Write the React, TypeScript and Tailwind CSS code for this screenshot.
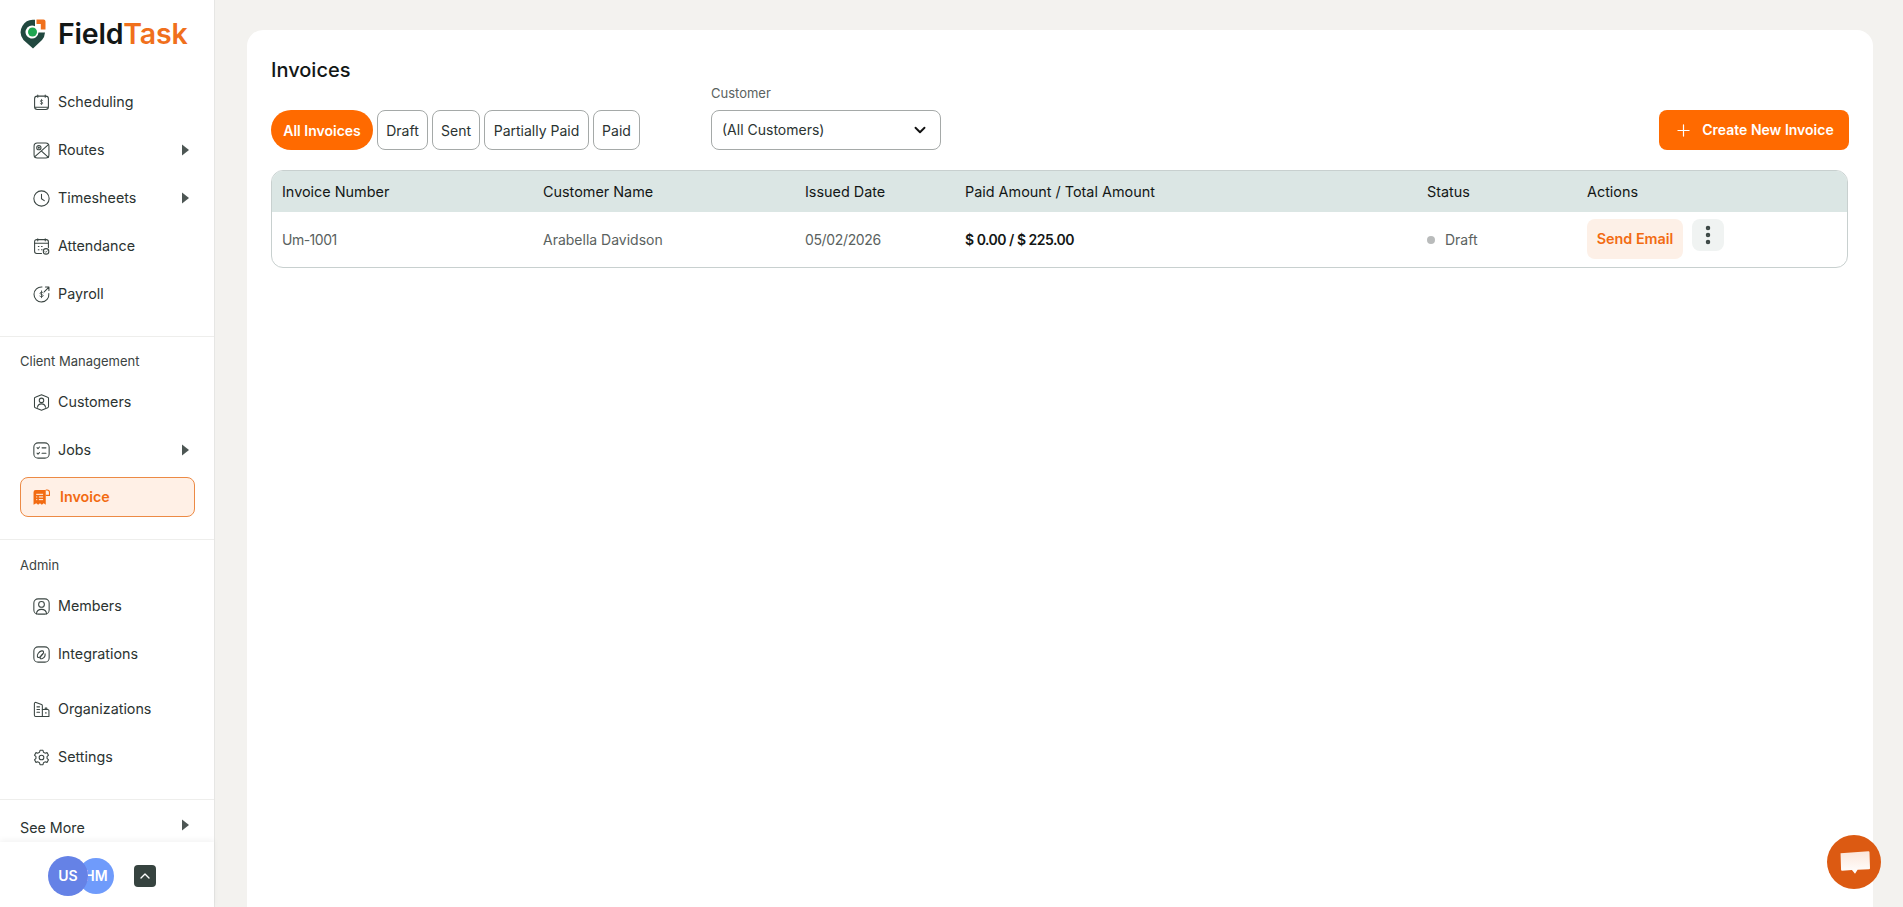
import React from 'react';
import { Plus, ChevronDown, ChevronUp, EllipsisVertical } from 'lucide-react';

const FONT = "font-['Inter','Liberation_Sans',sans-serif]";

const Svg: React.FC<{ children: React.ReactNode }> = ({ children }) => (
  <svg viewBox="0 0 16 16" fill="none" stroke="#3a4542" strokeWidth="1" strokeLinecap="round" strokeLinejoin="round" className="w-[17px] h-[17px] shrink-0">
    {children}
  </svg>
);

const SchedulingIcon = () => (
  <Svg>
    <rect x="1.5" y="2" width="13" height="12.5" rx="2.5" />
    <path d="M4.5 1v2M11.5 1v2M2 12.5h12" />
    <path d="M9.3 6.2c-.4-.5-2.4-.6-2.4.5s2.4.7 2.4 1.8-2.2 1-2.6.4M8 5v5" strokeWidth="0.7" />
  </Svg>
);
const RoutesIcon = () => (
  <Svg>
    <rect x="1" y="1" width="14" height="14" rx="3" />
    <path d="M1.5 14 14.5 2.5M8 8.5l6.5 6" />
    <circle cx="5.5" cy="5.3" r="2" />
    <circle cx="5.5" cy="5.3" r=".5" />
  </Svg>
);
const ClockIcon = () => (
  <Svg>
    <circle cx="8" cy="8" r="7.2" />
    <path d="M8 4v4.2l2.6 1.8" />
  </Svg>
);
const AttendanceIcon = () => (
  <Svg>
    <path d="M8 14.5H3.5a2 2 0 0 1-2-2V3.500a2 2 0 0 1 2-2h9a2 2 0 0 1 2 2V9" />
    <path d="M4.500.7v2M11.500.7v2M1.500 5h13" />
    <path d="M5 8h.6M8 8h.6M5 11h.6M8 11h.6" />
    <circle cx="12.300" cy="12.600" r="2.600" />
    <path d="m11.200 12.700.8.8 1.400-1.400" strokeWidth="0.7" />
  </Svg>
);
const PayrollIcon = () => (
  <Svg>
    <path d="M8.500 1a7 7 0 1 0 6.400 6.200" />
    <path d="M10.500 5.500 15 1M11.700 1H15v3.300" />
    <path d="M9.600 6.300c-.5-.7-3-.7-3 .6s3 .9 3 2.200-2.700 1.200-3.200.5M8 4.600v6.400" strokeWidth="0.8" />
  </Svg>
);
const CustomersIcon = () => (
  <Svg>
    <path d="M8 .8 13.800 3a1.200 1.200 0 0 1 .8 1.100v7.700a1.200 1.200 0 0 1-.8 1.100L8 15.200 2.200 13a1.200 1.200 0 0 1-.8-1.100V4.100A1.200 1.200 0 0 1 2.200 3z" />
    <circle cx="8" cy="6" r="2.100" />
    <path d="M4.200 12.500c.3-2 1.900-3.200 3.800-3.200s3.500 1.200 3.800 3.200" />
  </Svg>
);
const JobsIcon = () => (
  <Svg>
    <rect x=".8" y=".8" width="14.400" height="14.400" rx="4" />
    <path d="m3.800 5.300.9.9 1.400-1.500M8.500 5.500h3.700M8.500 10.500h3.700M3.800 10.500l.9.9 1.400-1.500" />
  </Svg>
);
const InvoiceIcon = () => (
  <svg viewBox="0 0 16 16" className="w-[17px] h-[17px] shrink-0">
    <path d="M.5 3a2 2 0 0 1 2-2H12v13.800l-1.900-1.300-1.800 1.400-1.700-1.400-1.800 1.400-1.700-1.400L.5 14.800z" fill="#f26b12" />
    <path d="M12 1h1.300A2.200 2.200 0 0 1 15.500 3.200V6H12" fill="none" stroke="#f26b12" strokeWidth="1" />
    <path d="M3 5h6.500M3 7.500h1M5.500 7.500h4M3 10h1M5.500 10h4" stroke="#fff" strokeWidth="0.9" />
  </svg>
);
const MembersIcon = () => (
  <Svg>
    <rect x=".8" y=".8" width="14.400" height="14.400" rx="4" />
    <circle cx="8" cy="6" r="2.700" />
    <path d="M3.200 15c.3-2.900 2.300-4.300 4.800-4.300s4.500 1.400 4.800 4.300" />
  </Svg>
);
const IntegrationsIcon = () => (
  <Svg>
    <rect x=".8" y=".8" width="14.400" height="14.400" rx="4" />
    <path d="M4.200 10.200c-.8-1.800 1.500-5.200 4-5.600 2-.3 2.300 1.500 1 3l-2 2.300c-1.300 1.400-.4 2.500 1.200 2 1.800-.6 3.200-2.700 3-4.600" />
    <path d="M4.200 10.200c.5 1 1.700.7 2.700-.3l2.200-2.400" />
  </Svg>
);
const OrganizationsIcon = () => (
  <Svg>
    <path d="M9.500 14.500H2.500a1.200 1.200 0 0 1-1.200-1.200V2.500a1.200 1.200 0 0 1 1.600-1.100L8 3.300a1.200 1.200 0 0 1 .8 1.100v10" />
    <path d="M3.700 5.500h2.500M3.700 8h2.500M3.700 10.500h2.500" />
    <path d="M8.800 8h5a1.200 1.200 0 0 1 1.200 1.200v5.300H8.800M11.500 8V6.500H13V8M11.800 11.200h.6" />
  </Svg>
);
const SettingsIcon = () => (
  <Svg>
    <path d="M6.600 1.200h2.800l.5 1.900 1.400.8 1.900-.5 1.400 2.400-1.400 1.400v1.600l1.400 1.400-1.400 2.400-1.900-.5-1.400.8-.5 1.900H6.600l-.5-1.900-1.400-.8-1.900.5-1.400-2.400 1.400-1.400V7.200L1.400 5.800l1.400-2.400 1.900.5 1.400-.8z" />
    <circle cx="8" cy="8" r="2.200" />
  </Svg>
);

const Caret = () => (
  <svg viewBox="0 0 7 12" className="w-[7px] h-3 shrink-0">
    <path d="M0 0.500 7 6 0 11.500z" fill="#4d5654" />
  </svg>
);

const Logo = () => (
  <svg viewBox="0 0 26 30" className="w-[26px] h-[30px] shrink-0">
    <path d="M15 .8A12.500 12.500 0 0 0 3.500 21L13 29.500 22 21A12.500 12.500 0 0 0 25 13.500H18.500A6.500 6.500 0 1 1 15 7.300z" fill="#21483f" />
    <circle cx="12.500" cy="13" r="4.500" fill="#1fa651" />
    <path d="M16.500 .5H23.500a2 2 0 0 1 2 2V10.500H20.800V5H16.500z" fill="#f0701c" />
  </svg>
);

const NavRow: React.FC<{ icon: React.ReactNode; label: string; caret?: boolean }> = ({ icon, label, caret }) => (
  <div className="h-12 pl-[33px] pr-[25px] flex items-center gap-2 text-[14.3px] text-[#2b3331]">
    {icon}
    <span className="flex-1">{label}</span>
    {caret && <Caret />}
  </div>
);

const tabs = [
  { label: 'Draft', width: 'w-[51px]' },
  { label: 'Sent', width: 'w-[48px]' },
  { label: 'Partially Paid', width: 'w-[105px]' },
  { label: 'Paid', width: 'w-[47px]' },
];

const COLS = 'grid grid-cols-[261px_262px_160px_462px_160px_1fr] items-center pl-[10px]';

const App: React.FC = () => {
  return (
    <div className={`h-screen w-full overflow-hidden flex bg-[#f3f2ef] ${FONT}`}>
      <aside className="w-[215px] shrink-0 h-full bg-white border-r border-[#e6e6e4] flex flex-col relative">
        <div className="h-[78px] pl-5 pt-[19px] flex items-start gap-3">
          <Logo />
          <div className="text-[28.5px] leading-[30px] font-semibold tracking-[-0.2px] text-[#131716]">
            Field<span className="text-[#f0701c]">Task</span>
          </div>
        </div>

        <NavRow icon={<SchedulingIcon />} label="Scheduling" />
        <NavRow icon={<RoutesIcon />} label="Routes" caret />
        <NavRow icon={<ClockIcon />} label="Timesheets" caret />
        <NavRow icon={<AttendanceIcon />} label="Attendance" />
        <NavRow icon={<PayrollIcon />} label="Payroll" />

        <div className="mt-[18px] border-t border-[#eeeeec]" />
        <div className="h-[41px] pl-5 pt-[14px] text-[13px] leading-5 text-[#3c4442]">Client Management</div>
        <NavRow icon={<CustomersIcon />} label="Customers" />
        <NavRow icon={<JobsIcon />} label="Jobs" caret />
        <div className="mx-5 mt-[3px] h-10 w-[175px] rounded-lg border border-[#ec8a45] bg-[#fff0e6] pl-3 flex items-center gap-[10px] text-[14.3px] font-semibold text-[#f26b12]">
          <InvoiceIcon />
          Invoice
        </div>

        <div className="mt-[22px] border-t border-[#eeeeec]" />
        <div className="h-[42px] pl-5 pt-[15px] text-[13px] leading-5 text-[#3c4442]">Admin</div>
        <NavRow icon={<MembersIcon />} label="Members" />
        <NavRow icon={<IntegrationsIcon />} label="Integrations" />
        <div className="h-[7px]" />
        <NavRow icon={<OrganizationsIcon />} label="Organizations" />
        <NavRow icon={<SettingsIcon />} label="Settings" />

        <div className="mt-[18px] border-t border-[#eeeeec]" />
        <div className="h-[42px] pl-5 pr-[25px] flex items-center justify-between text-[14.3px] text-[#2b3331]">
          <span className="pt-[14px]">See More</span>
          <span className="pt-[8px]"><Caret /></span>
        </div>

        <div className="flex-1 bg-white shadow-[0_-2px_6px_rgba(0,0,0,0.05)] flex items-center pl-12 pt-[2px] relative">
          <div className="w-10 h-10 rounded-full bg-[#6582e6] text-white text-sm font-semibold flex items-center justify-center relative z-10">US</div>
          <div className="w-9 h-9 -ml-[10px] rounded-full bg-[#6f9bfb] text-white text-sm font-semibold flex items-center justify-center">HM</div>
          <button className="ml-[20px] w-[22px] h-[22px] rounded bg-[#36433f] flex items-center justify-center text-white">
            <ChevronUp className="w-4 h-4" strokeWidth={2} />
          </button>
        </div>
      </aside>

      <main className="flex-1 min-w-0 h-full pl-[32px] pr-[30px] pt-[30px]">
        <div className="h-full bg-white rounded-t-2xl px-6 pt-[26px]">
          <h1 className="text-xl leading-7 font-medium text-[#131716]">Invoices</h1>

          <div className="flex items-end justify-between mt-[2px] h-[64px]">
            <div className="flex items-end">
              <div className="flex gap-1 text-sm">
                <button className="h-10 w-[102px] pt-[2px] rounded-[20px] bg-[#ff6a00] text-white font-semibold text-[14px]">All Invoices</button>
                {tabs.map(t => (
                  <button key={t.label} className={`h-10 ${t.width} pt-[2px] rounded-lg border border-[#a5a9a8] text-[#2b3331]`}>{t.label}</button>
                ))}
              </div>
              <div className="ml-[71px] w-[230px]">
                <div className="text-[13px] leading-5 text-[#5a6260] mb-[7px]">Customer</div>
                <div className="h-10 rounded-lg border border-[#a5a9a8] pl-[10px] pr-[11px] flex items-center justify-between text-sm text-[#2b3331]">
                  (All Customers)
                  <ChevronDown className="w-[18px] h-[18px] text-[#111]" strokeWidth={2.5} />
                </div>
              </div>
            </div>
            <button className="h-10 w-[190px] rounded-lg bg-[#ff6a00] text-white text-sm font-semibold flex items-center justify-center gap-[9px]">
              <Plus className="w-[19px] h-[19px]" strokeWidth={1.5} />
              Create New Invoice
            </button>
          </div>

          <div className="mt-5 rounded-xl border border-[#c8d0cf] overflow-hidden mr-px">
            <div className={`${COLS} h-[41px] bg-[#dbe6e4] text-[14.4px] text-[#131716]`}>
              <span>Invoice Number</span>
              <span>Customer Name</span>
              <span>Issued Date</span>
              <span>Paid Amount / Total Amount</span>
              <span>Status</span>
              <span>Actions</span>
            </div>
            <div className={`${COLS} h-[55px] text-sm text-[#5a6260]`}>
              <span className="tracking-[-0.5px] pt-[1px]">Um-1001</span>
              <span className="pt-[1px]">Arabella Davidson</span>
              <span className="tracking-[-0.36px] pt-[1px]">05/02/2026</span>
              <span className="font-semibold text-[#131716] tracking-[-0.5px] pt-[1px]">$ 0.00 / $ 225.00</span>
              <span className="flex items-center gap-[10px] pt-[1px]">
                <span className="w-2 h-2 rounded-full bg-[#b9bbbb]" />
                Draft
              </span>
              <span className="flex items-start gap-[9px] self-start mt-[7px]">
                <button className="h-10 w-[96px] rounded-lg bg-[#fdf0e7] text-[#f26b12] font-semibold text-[14.4px]">Send Email</button>
                <button className="w-8 h-8 rounded-lg bg-[#f0f3f2] flex items-center justify-center text-[#3d4845]">
                  <EllipsisVertical className="w-6 h-6" strokeWidth={2.5} />
                </button>
              </span>
            </div>
          </div>
        </div>
      </main>

      <div className="absolute right-[22px] bottom-[18px] w-[54px] h-[54px] rounded-full bg-[#dc5a12] flex items-center justify-center">
        <svg viewBox="0 0 30 24" className="w-[31px] h-[25px]">
          <defs>
            <linearGradient id="chat" x1="0" y1="0" x2="0" y2="1">
              <stop offset="0" stopColor="#fbe6da" />
              <stop offset="1" stopColor="#ffffff" />
            </linearGradient>
          </defs>
          <path d="M1.500 3 28.500 1a1 1 0 0 1 1 1l.5 15.500a1 1 0 0 1-1 1L18 19l-2.500 4-3-3.800L3 20a1 1 0 0 1-1-1z" fill="url(#chat)" />
        </svg>
      </div>
    </div>
  );
};

export default App;
